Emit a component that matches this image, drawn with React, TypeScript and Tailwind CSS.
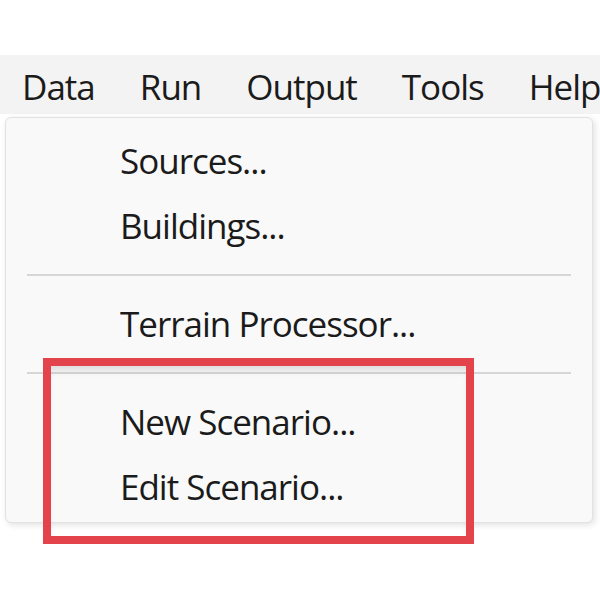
const menuBar = ['Data', 'Run', 'Output', 'Tools', 'Help']

function Item({ label }: { label: string }) {
  return (
    <div className="h-[65px] flex items-center pl-[114px] text-[35px] leading-none tracking-[-1px] text-[#1b1b1b]">
      {label}
    </div>
  )
}

function Separator() {
  return (
    <div className="h-[33px] flex items-center px-[21px]">
      <div className="h-[2px] w-full bg-[#d6d6d6]" />
    </div>
  )
}

export default function App() {
  return (
    <div
      className="relative w-[600px] h-[600px] overflow-hidden bg-white"
      style={{ fontFamily: '"Open Sans", "Noto Sans", sans-serif' }}
    >
      <div className="h-[55px]" />

      {/* menu bar */}
      <div className="h-[59px] bg-[#f3f3f3] flex items-center gap-[45px] pl-[22px] pt-[3px] text-[35px] leading-none tracking-[-1px] text-[#1b1b1b] whitespace-nowrap">
        {menuBar.map((m) => (
          <span key={m}>{m}</span>
        ))}
      </div>

      {/* dropdown */}
      <div className="ml-[5px] mt-[3px] w-[588px] h-[406px] bg-[#f9f9f9] border border-[#e2e2e2] rounded-[6px] shadow-[2px_2px_6px_rgba(0,0,0,0.12)] pt-[10px]">
        <Item label="Sources..." />
        <Item label="Buildings..." />
        <Separator />
        <Item label="Terrain Processor..." />
        <Separator />
        <Item label="New Scenario..." />
        <Item label="Edit Scenario..." />
      </div>

      {/* highlight */}
      <div className="absolute left-[43px] top-[358px] w-[431px] h-[186px] border-[8px] border-[#e3444c] shadow-[inset_0_8px_8px_-4px_rgba(0,0,0,0.12)]" />
    </div>
  )
}
